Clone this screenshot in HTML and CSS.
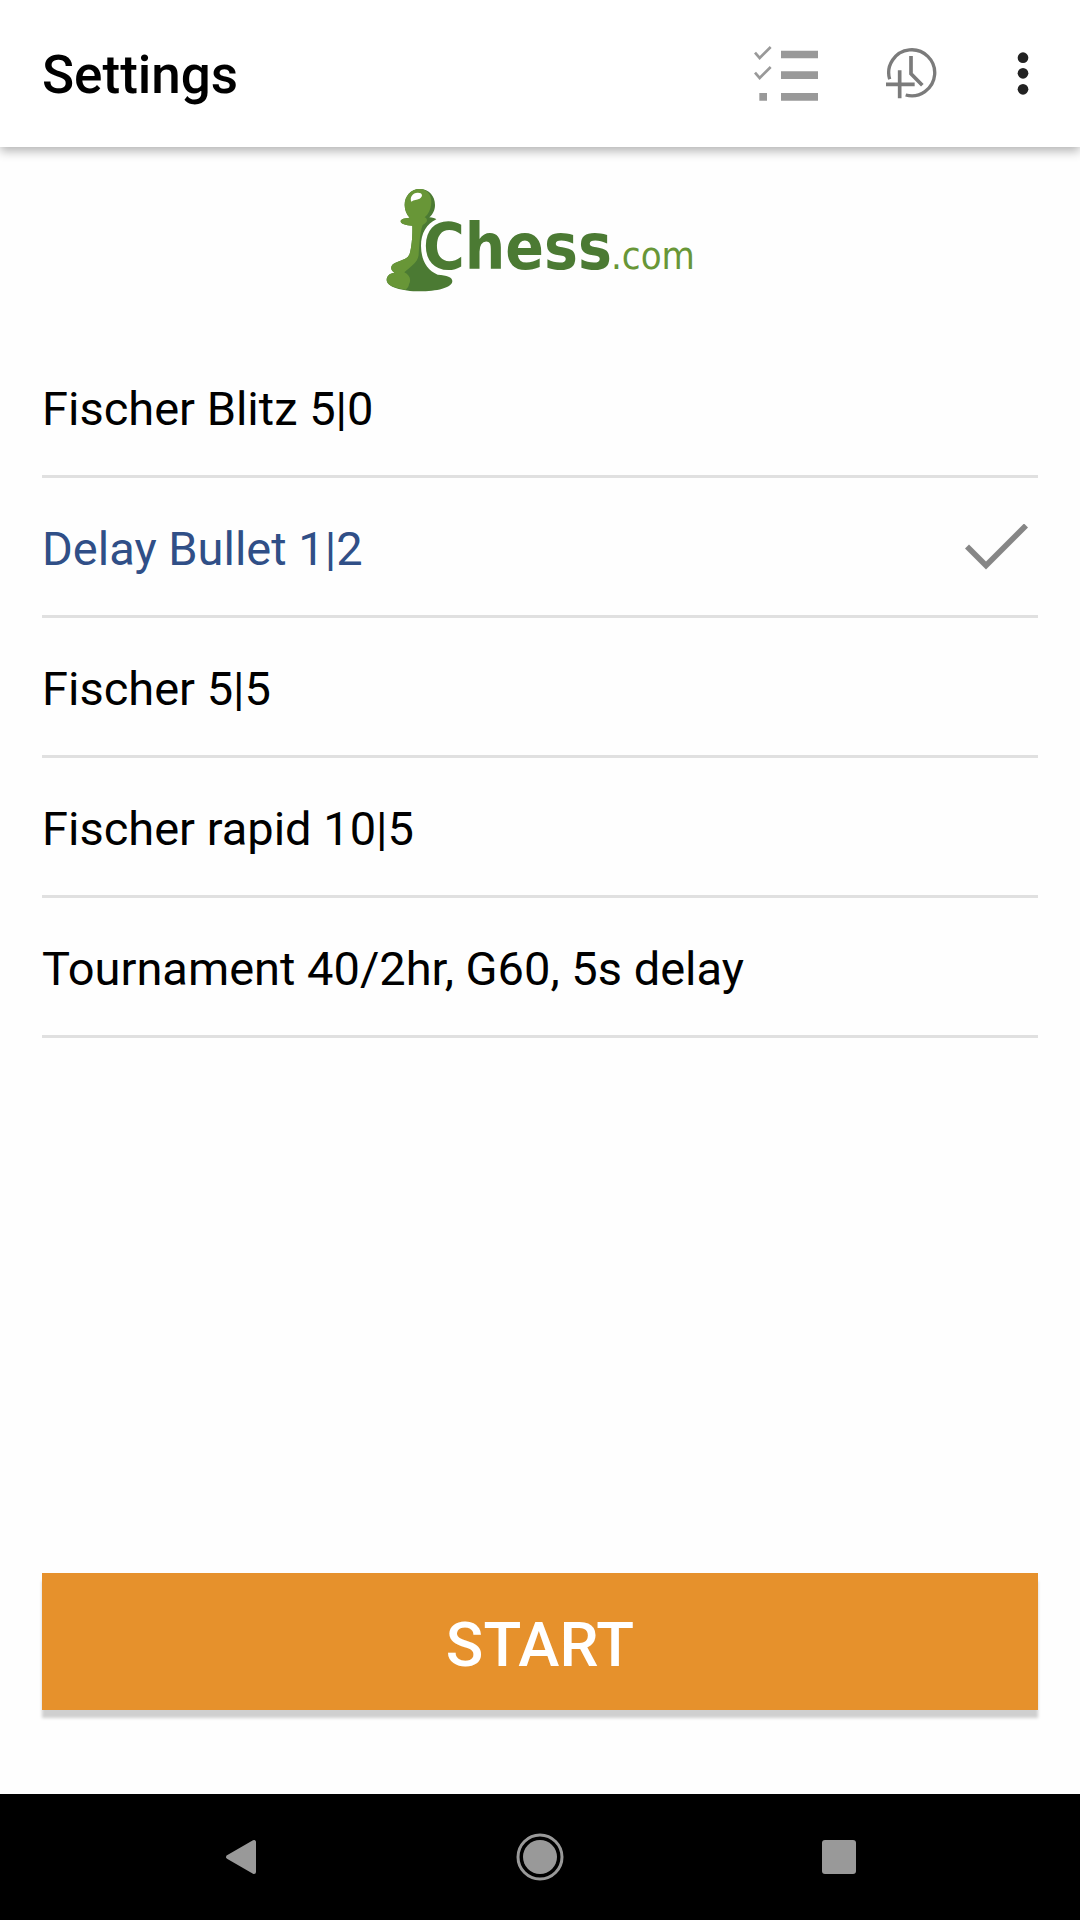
FILE: index.html
```html
<!DOCTYPE html>
<html lang="en">
<head>
<meta charset="utf-8">
<meta name="viewport" content="width=device-width, initial-scale=1">
<title>Settings</title>
<link rel="stylesheet" href="styles.css">
</head>
<body>
<header class="app-bar">
  <h1 class="title">Settings</h1>
  <button class="action" type="button" aria-label="Edit list">
    <svg width="64" height="56" viewBox="72 76 192 168">
      <g fill="none" stroke="#999" stroke-width="8"><path d="M75 96L89 112L122 79M75 156L89 172L122 139"/></g>
      <path fill="#999" d="M153 90h111v23H153zM153 152h111v23H153zM153 217h111v23H153zM88 217h23v23H88z"/>
    </svg>
  </button>
  <button class="action" type="button" aria-label="Add time control">
    <svg width="52" height="52" viewBox="468 84 156 156" fill="none" stroke="#7b7b7b">
      <path stroke-width="10" d="M479 178A69 69 0 1 1 527 225"/>
      <path stroke-width="11" d="M543 108V161L577 196"/>
      <path stroke-width="11" d="M468 193H554M509 151V235"/>
    </svg>
  </button>
  <button class="action action-more" type="button" aria-label="More options">
    <svg width="12" height="43" viewBox="859 96 36 129" fill="#222"><circle cx="877" cy="113" r="16"/><circle cx="877" cy="160" r="16"/><circle cx="877" cy="208" r="16"/></svg>
  </button>
</header>
<main class="content">
  <svg class="logo" width="308" height="105" viewBox="50 55 924 315" role="img" aria-label="Chess.com">
    <path fill="#4b7a33" d="M151 58C180 58 197 80 197 106C197 122 190 134 180 143C190 144 197 145 201 149C172 163 155 190 155 229C156 272 171 300 205 315C233 317 249 322 249 334C249 355 201 365 151 365C98 365 52 352 52 331C52 318 63 310 76 310C62 302 62 286 77 280C103 269 116 267 121 252C127 232 130 197 129 168C109 167 94 163 94 155C94 148 106 145 121 144C111 134 106 120 106 106C106 80 124 58 151 58Z"/>
    <path fill="#689637" d="M151 58C174 59 187 76 186 98C185 119 177 134 166 143C176 148 176 158 160 166C151 188 149 239 148 256C145 280 120 293 105 308C120 316 127 329 119 344C118 350 116 354 109 360C76 356 52 346 52 331C52 318 63 310 76 310C62 302 62 286 77 280C103 269 116 267 121 252C127 232 130 197 129 168C109 167 94 163 94 155C94 148 106 145 121 144C111 134 106 120 106 106C106 80 124 58 151 58Z"/>
    <path fill="#fff" d="M126 96C120 83 131 68 146 69C160 69 162 80 151 87C142 92 134 89 126 96Z"/>
    <text class="logo-name" x="161" y="298">Chess</text>
    <text class="logo-domain" x="725" y="298">.com</text>
  </svg>
  <form class="settings">
    <fieldset class="controls" aria-label="Time control">
      <label class="row"><input class="row-input" type="radio" name="control"><span class="row-text">Fischer Blitz 5|0</span></label>
      <label class="row"><input class="row-input" type="radio" name="control" checked><span class="row-text">Delay Bullet 1|2</span></label>
      <label class="row"><input class="row-input" type="radio" name="control"><span class="row-text">Fischer 5|5</span></label>
      <label class="row"><input class="row-input" type="radio" name="control"><span class="row-text">Fischer rapid 10|5</span></label>
      <label class="row"><input class="row-input" type="radio" name="control"><span class="row-text">Tournament 40/2hr, G60, 5s delay</span></label>
    </fieldset>
    <button class="start" type="button">START</button>
  </form>
</main>
<nav class="system-bar" aria-label="System">
  <button class="system-button" type="button" aria-label="Back">
    <svg width="32" height="36" viewBox="0 0 32 36"><path fill="#999" stroke="#999" stroke-width="4" stroke-linejoin="round" d="M3 18L29 3V33Z"/></svg>
  </button>
  <button class="system-button" type="button" aria-label="Home">
    <svg width="48" height="48" viewBox="0 0 48 48"><circle cx="24" cy="24" r="17" fill="#999"/><circle cx="24" cy="24" r="22" fill="none" stroke="#999" stroke-width="3"/></svg>
  </button>
  <button class="system-button" type="button" aria-label="Recent apps">
    <svg width="34" height="34" viewBox="0 0 34 34"><rect width="34" height="34" rx="3" fill="#999"/></svg>
  </button>
</nav>
</body>
</html>
```
FILE: styles.css
```css
* { box-sizing: border-box; }

body {
  margin: 0;
  min-height: 100vh;
  display: flex;
  flex-direction: column;
  background: #fefefe;
  color: #000;
  font-family: Roboto, "Liberation Sans", sans-serif;
}

button {
  border: 0;
  padding: 0;
  background: none;
  font: inherit;
  cursor: pointer;
}

.app-bar {
  display: flex;
  height: 147px;
  padding: 0 10px 0 42px;
  background: #fff;
  box-shadow: 0 4px 10px rgba(0, 0, 0, 0.3);
}

.title {
  flex: 1;
  margin: 0;
  padding-top: 4px;
  font-size: 53px;
  font-weight: 500;
  line-height: 143px;
}

.action {
  display: flex;
  align-items: center;
  justify-content: center;
  width: 126px;
}

.action-more { width: 95px; }

.content {
  flex: 1;
  display: flex;
  flex-direction: column;
  padding: 41px 42px 84px;
}

.logo {
  align-self: center;
  margin-bottom: 45px;
  overflow: visible;
}

.logo-name {
  fill: #4b7a33;
  font: 700 190px "DejaVu Sans Condensed", "DejaVu Sans", sans-serif;
}

.logo-domain {
  fill: #689637;
  font: 400 114px "DejaVu Sans Condensed", "DejaVu Sans", sans-serif;
}

.settings {
  flex: 1;
  display: flex;
  flex-direction: column;
  justify-content: space-between;
}

.controls {
  margin: 0;
  padding: 0;
  border: 0;
}

.row {
  display: flex;
  align-items: center;
  justify-content: space-between;
  height: 140px;
  padding-right: 10px;
  border-bottom: 3px solid #e0e0e0;
  font-size: 47px;
  cursor: pointer;
}

/* The tick on the selected row stands in for the radio dot. */
.row-input {
  position: absolute;
  opacity: 0;
}

.row-text { padding-top: 4px; }

.row:has(:checked) { color: #304f87; }

.row:has(:checked)::after {
  content: "";
  width: 63px;
  height: 46px;
  background: #868686;
  clip-path: polygon(0 25px, 4px 21px, 21px 38px, 59px 0, 63px 4px, 21px 46px);
}

.start {
  height: 137px;
  padding-top: 6px;
  background: #e6912c;
  box-shadow: 0 8px 3px #cfcfcf;
  color: #fff;
  font-size: 62px;
  font-weight: 500;
}

.system-bar {
  display: flex;
  justify-content: center;
  gap: 16%;
  height: 126px;
  background: #000;
}

.system-button {
  display: flex;
  align-items: center;
  justify-content: center;
  width: 126px;
}
```
